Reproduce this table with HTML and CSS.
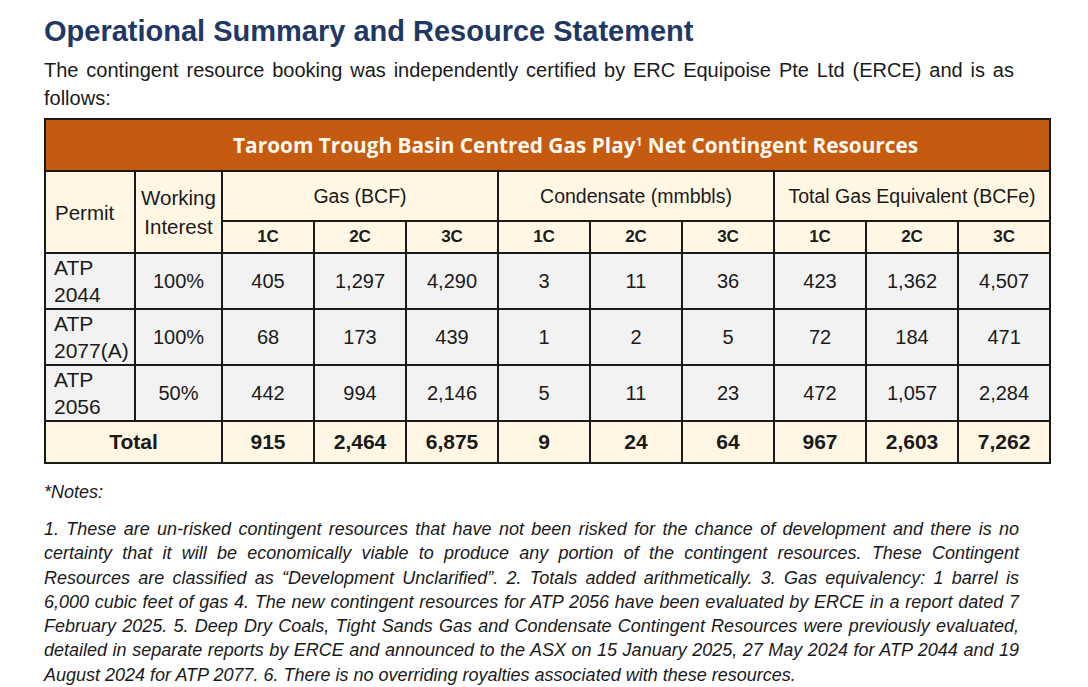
FILE: index.html
```html
<!DOCTYPE html>
<html lang="en">
<head>
<meta charset="utf-8">
<title>Operational Summary and Resource Statement</title>
<link rel="stylesheet" href="styles.css">
</head>
<body>
<main class="page">
  <h1 class="title">Operational Summary and Resource Statement</h1>
  <p class="intro">The contingent resource booking was independently certified by ERC Equipoise Pte Ltd (ERCE) and is as follows:</p>

  <table class="res">
    <colgroup>
      <col class="c-permit"><col class="c-wi">
      <col class="c-n"><col class="c-n"><col class="c-n">
      <col class="c-n"><col class="c-n"><col class="c-n">
      <col class="c-n"><col class="c-n"><col class="c-n">
    </colgroup>
    <thead>
      <tr class="r-title">
        <th colspan="11">Taroom Trough Basin Centred Gas Play<sup>1</sup> Net Contingent Resources</th>
      </tr>
      <tr class="r-group">
        <th rowspan="2" class="permit-h">Permit</th>
        <th rowspan="2" class="wi-h">Working<br>Interest</th>
        <th colspan="3">Gas (BCF)</th>
        <th colspan="3">Condensate (mmbbls)</th>
        <th colspan="3">Total Gas Equivalent (BCFe)</th>
      </tr>
      <tr class="r-sub">
        <th>1C</th><th>2C</th><th>3C</th>
        <th>1C</th><th>2C</th><th>3C</th>
        <th>1C</th><th>2C</th><th>3C</th>
      </tr>
    </thead>
    <tbody>
      <tr class="r-data">
        <td class="permit">ATP<br>2044</td><td>100%</td>
        <td>405</td><td>1,297</td><td>4,290</td>
        <td>3</td><td>11</td><td>36</td>
        <td>423</td><td>1,362</td><td>4,507</td>
      </tr>
      <tr class="r-data">
        <td class="permit">ATP<br>2077(A)</td><td>100%</td>
        <td>68</td><td>173</td><td>439</td>
        <td>1</td><td>2</td><td>5</td>
        <td>72</td><td>184</td><td>471</td>
      </tr>
      <tr class="r-data">
        <td class="permit">ATP<br>2056</td><td>50%</td>
        <td>442</td><td>994</td><td>2,146</td>
        <td>5</td><td>11</td><td>23</td>
        <td>472</td><td>1,057</td><td>2,284</td>
      </tr>
      <tr class="r-total">
        <td colspan="2">Total</td>
        <td>915</td><td>2,464</td><td>6,875</td>
        <td>9</td><td>24</td><td>64</td>
        <td>967</td><td>2,603</td><td>7,262</td>
      </tr>
    </tbody>
  </table>

  <p class="notes-h">*Notes:</p>
  <p class="notes">1. These are un-risked contingent resources that have not been risked for the chance of development and there is no certainty that it will be economically viable to produce any portion of the contingent resources. These Contingent Resources are classified as “Development Unclarified”. 2. Totals added arithmetically. 3. Gas equivalency: 1 barrel is 6,000 cubic feet of gas 4. The new contingent resources for ATP 2056 have been evaluated by ERCE in a report dated 7 February 2025. 5. Deep Dry Coals, Tight Sands Gas and Condensate Contingent Resources were previously evaluated, detailed in separate reports by ERCE and announced to the ASX on 15 January 2025, 27 May 2024 for ATP 2044 and 19 August 2024 for ATP 2077. 6. There is no overriding royalties associated with these resources.</p>
</main>
</body>
</html>
```

FILE: styles.css
```css
html, body {
  margin: 0;
  padding: 0;
  background: #ffffff;
}

.page {
  padding: 14px 0 0 44px;
  width: 1006px;
  font-family: "Liberation Sans", Arial, sans-serif;
  color: #1a1a1a;
}

.title {
  margin: 0;
  font-size: 29px;
  line-height: 34px;
  font-weight: 700;
  color: #1f3864;
}

.intro {
  margin: 8px 0 0;
  font-size: 20px;
  line-height: 28px;
  width: 970px;
  text-align: justify;
}

.res {
  margin-top: 6px;
  width: 1006px;
  border-collapse: collapse;
  table-layout: fixed;
  font-size: 20px;
  color: #1a1a1a;
}

.c-permit { width: 90px; }
.c-wi { width: 87px; }
.c-n { width: 92px; }

.res th,
.res td {
  border: 2px solid #1a1a1a;
  padding: 0;
  text-align: center;
  vertical-align: middle;
}

.r-title th {
  background: #c55a11;
  color: #fff8ee;
  height: 50px;
  padding-left: 56px;
  font-family: "Open Sans", "Liberation Sans", sans-serif;
  font-size: 20.8px;
  font-weight: 700;
}

.r-title sup {
  font-size: 12px;
  vertical-align: 7px;
  line-height: 0;
}

.r-group th {
  background: #fff6e4;
  height: 48px;
  font-size: 19.5px;
  font-weight: 400;
  line-height: 29px;
}

.r-group .permit-h,
.r-group .wi-h {
  font-size: 20.5px;
}

.r-group .permit-h {
  text-align: left;
  padding-left: 9px;
}

.r-sub th {
  background: #fff6e4;
  height: 30px;
  font-size: 17px;
  font-weight: 700;
}

.r-data td {
  background: #f2f2f2;
  height: 54px;
  line-height: 27px;
}

.r-data .permit {
  text-align: left;
  padding-left: 8px;
  font-size: 21px;
  line-height: 27px;
}

.r-total td {
  background: #fff6e4;
  height: 40px;
  font-size: 21px;
  font-weight: 700;
}

.notes-h {
  margin: 16px 0 0;
  font-size: 18px;
  font-style: italic;
  line-height: 24px;
}

.notes {
  margin: 13px 0 0;
  width: 975px;
  font-size: 18px;
  font-style: italic;
  line-height: 24.3px;
  text-align: justify;
}
```
